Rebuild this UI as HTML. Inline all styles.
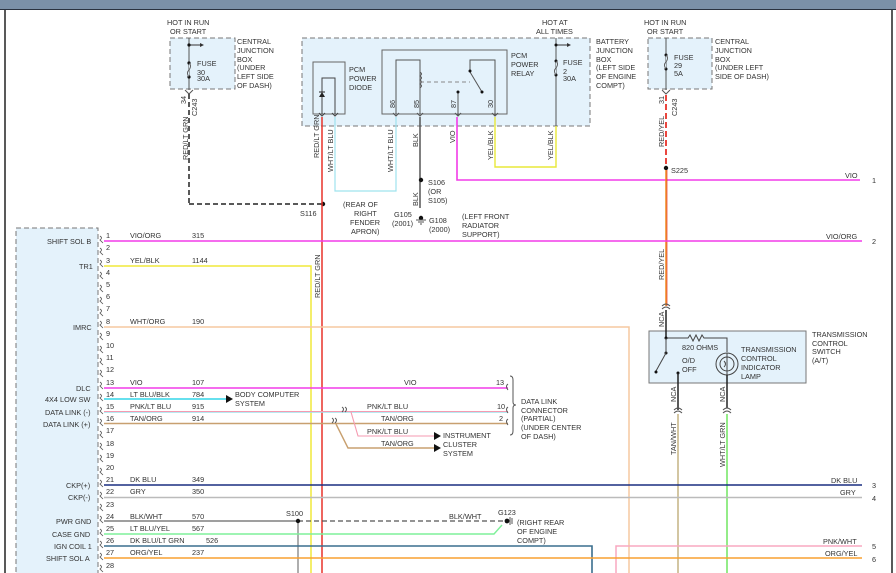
<!DOCTYPE html>
<html><head><meta charset="utf-8"><style>
html,body{margin:0;padding:0;background:#fff;}
svg{display:block;font-family:"Liberation Sans",sans-serif;}
text{font-size:7.3px;fill:#333;}
</style></head><body>
<svg width="896" height="573" viewBox="0 0 896 573" xmlns="http://www.w3.org/2000/svg">
<rect x="0" y="0" width="896" height="9" fill="#7b91a8"/>
<line x1="0" y1="9.5" x2="896" y2="9.5" stroke="#2a3340" stroke-width="1"/>
<line x1="5" y1="10" x2="5" y2="573" stroke="#222" stroke-width="1.5"/>
<line x1="892" y1="10" x2="892" y2="573" stroke="#222" stroke-width="1.5"/>

<!-- boxes -->
<rect x="170" y="38" width="65" height="51" fill="#e4f2fb" stroke="#777" stroke-dasharray="5,3"/>
<rect x="302" y="38" width="288" height="88" fill="#e4f2fb" stroke="#777" stroke-dasharray="5,3"/>
<rect x="313" y="62" width="32" height="52" fill="none" stroke="#666"/>
<rect x="382" y="50" width="125" height="64" fill="none" stroke="#666"/>
<rect x="648" y="38" width="64" height="51" fill="#e4f2fb" stroke="#777" stroke-dasharray="5,3"/>
<rect x="16" y="228" width="82" height="350" fill="#e4f2fb" stroke="#777" stroke-dasharray="5,3"/>
<rect x="649" y="331" width="157" height="52" fill="#e4f2fb" stroke="#777"/>

<!-- top left CJB -->
<text x="167" y="25">HOT IN RUN</text><text x="170" y="34">OR START</text>
<line x1="189" y1="38" x2="189" y2="90" stroke="#555"/>
<line x1="189" y1="45" x2="202" y2="45" stroke="#333"/><path d="M200,43 L204,45 L200,47Z" fill="#333"/>
<circle cx="189" cy="45" r="1.6" fill="#111"/><circle cx="189" cy="63" r="1.6" fill="#111"/><circle cx="189" cy="77" r="1.6" fill="#111"/>
<path d="M189,63 q3,3 0,7 q-3,3 0,7" fill="#e4f2fb" stroke="#555"/>
<text x="197" y="66">FUSE</text><text x="197" y="75">30</text><text x="197" y="81">30A</text>
<text x="237" y="44">CENTRAL</text><text x="237" y="53">JUNCTION</text><text x="237" y="62">BOX</text><text x="237" y="70">(UNDER</text><text x="237" y="79">LEFT SIDE</text><text x="237" y="88">OF DASH)</text>
<path d="M185,90 l4,4 l4,-4" fill="none" stroke="#555"/>
<line x1="189" y1="94" x2="189" y2="204" stroke="#222" stroke-width="1.5" stroke-dasharray="5,3"/>
<line x1="189" y1="204" x2="323" y2="204" stroke="#222" stroke-width="1.5" stroke-dasharray="5,3"/>
<text transform="translate(186,104) rotate(-90)">34</text>
<text transform="translate(197,116) rotate(-90)">C243</text>
<text transform="translate(188,160) rotate(-90)">RED/LT GRN</text>
<circle cx="323" cy="204" r="2.2" fill="#111"/>
<text x="300" y="216">S116</text>
<text x="343" y="207">(REAR OF</text><text x="354" y="216">RIGHT</text><text x="350" y="225">FENDER</text><text x="351" y="234">APRON)</text>

<!-- diode -->
<path d="M322,114 V78 H335 V114" fill="none" stroke="#444"/>
<path d="M319,97 h6 l-3,-5z" fill="#222"/><line x1="319" y1="92" x2="325" y2="92" stroke="#222"/>
<path d="M319,113 l3,3 l3,-3 M332,113 l3,3 l3,-3" fill="none" stroke="#444"/>
<text x="349" y="72">PCM</text><text x="349" y="81">POWER</text><text x="349" y="90">DIODE</text>
<line x1="322" y1="117" x2="322" y2="573" stroke="#e8322a" stroke-width="1.5"/>
<path d="M335,117 V191 H396 V117" fill="none" stroke="#9fe3ee" stroke-width="1.2"/>
<text transform="translate(319,158) rotate(-90)">RED/LT GRN</text>
<text transform="translate(333,172) rotate(-90)">WHT/LT BLU</text>
<text transform="translate(393,172) rotate(-90)">WHT/LT BLU</text>

<!-- relay -->
<path d="M396,114 V60 H420 V114" fill="none" stroke="#555"/>
<path d="M420,72 q3,2 0,4 q3,2 0,4 q3,2 0,4 q3,2 0,4" fill="none" stroke="#555"/>
<line x1="420" y1="82" x2="470" y2="82" stroke="#888" stroke-dasharray="4,3"/>
<path d="M458,92 V116 M495,116 V60 H470 V72" fill="none" stroke="#555"/>
<line x1="470" y1="72" x2="482" y2="92" stroke="#555"/>
<circle cx="470" cy="71" r="1.5" fill="#111"/><circle cx="482" cy="92" r="1.5" fill="#111"/><circle cx="458" cy="92" r="1.5" fill="#111"/>
<path d="M393,113 l3,3 l3,-3 M417,113 l3,3 l3,-3 M455,113 l3,3 l3,-3 M492,113 l3,3 l3,-3" fill="none" stroke="#555"/>
<text transform="translate(395,108) rotate(-90)">86</text><text transform="translate(419,108) rotate(-90)">85</text>
<text transform="translate(456,108) rotate(-90)">87</text><text transform="translate(493,108) rotate(-90)">30</text>
<text x="511" y="58">PCM</text><text x="511" y="67">POWER</text><text x="511" y="76">RELAY</text>
<line x1="420" y1="117" x2="420" y2="208" stroke="#555" stroke-width="1.5"/>
<circle cx="421" cy="180" r="2.2" fill="#111"/>
<text transform="translate(418,147) rotate(-90)">BLK</text>
<text transform="translate(418,206) rotate(-90)">BLK</text>
<text x="428" y="185">S106</text><text x="428" y="194">(OR</text><text x="428" y="203">S105)</text>
<circle cx="421" cy="218" r="2.2" fill="#111"/>
<path d="M416,220 h10 M418,222 h6 M420,224 h2" stroke="#555"/>
<text x="394" y="217">G105</text><text x="392" y="226">(2001)</text>
<text x="429" y="223">G108</text><text x="429" y="232">(2000)</text>
<text x="462" y="219">(LEFT FRONT</text><text x="462" y="228">RADIATOR</text><text x="462" y="237">SUPPORT)</text>
<path d="M457,117 V180 H860" fill="none" stroke="#f23be8" stroke-width="1.6"/>
<text transform="translate(455,143) rotate(-90)">VIO</text>
<path d="M495,117 V167 H556 V126" fill="none" stroke="#e8e83a" stroke-width="1.4"/>
<text transform="translate(493,160) rotate(-90)">YEL/BLK</text>
<text transform="translate(553,160) rotate(-90)">YEL/BLK</text>
<line x1="556" y1="38" x2="556" y2="126" stroke="#555"/>
<path d="M556,45 h13" stroke="#333"/><path d="M567,43 l4,2 l-4,2z" fill="#333"/>
<circle cx="556" cy="45" r="1.5" fill="#111"/><circle cx="556" cy="61" r="1.5" fill="#111"/><circle cx="556" cy="75" r="1.5" fill="#111"/>
<path d="M556,61 q3,3 0,7 q-3,3 0,7" fill="#e4f2fb" stroke="#555"/>
<text x="563" y="65">FUSE</text><text x="563" y="74">2</text><text x="563" y="81">30A</text>
<text x="542" y="25">HOT AT</text><text x="536" y="34">ALL TIMES</text>
<text x="596" y="44">BATTERY</text><text x="596" y="53">JUNCTION</text><text x="596" y="62">BOX</text><text x="596" y="70">(LEFT SIDE</text><text x="596" y="79">OF ENGINE</text><text x="596" y="88">COMPT)</text>

<!-- right CJB -->
<text x="644" y="25">HOT IN RUN</text><text x="647" y="34">OR START</text>
<line x1="666" y1="38" x2="666" y2="90" stroke="#555"/>
<circle cx="666" cy="55" r="1.5" fill="#111"/><circle cx="666" cy="69" r="1.5" fill="#111"/>
<path d="M666,55 q3,3 0,7 q-3,3 0,7" fill="#e4f2fb" stroke="#555"/>
<text x="674" y="60">FUSE</text><text x="674" y="68">29</text><text x="674" y="76">5A</text>
<text x="715" y="44">CENTRAL</text><text x="715" y="53">JUNCTION</text><text x="715" y="62">BOX</text><text x="715" y="70">(UNDER LEFT</text><text x="715" y="79">SIDE OF DASH)</text>
<path d="M662,90 l4,4 l4,-4" fill="none" stroke="#555"/>
<line x1="666" y1="95" x2="666" y2="166" stroke="#e8322a" stroke-width="1.8" stroke-dasharray="6,3"/>
<text transform="translate(664,104) rotate(-90)">31</text>
<text transform="translate(677,116) rotate(-90)">C243</text>
<text transform="translate(664,147) rotate(-90)">RED/YEL</text>
<circle cx="666" cy="168" r="2.2" fill="#111"/>
<text x="671" y="173">S225</text>
<text x="845" y="178">VIO</text><text x="872" y="183">1</text>
<line x1="666" y1="170" x2="666" y2="306" stroke="#f08a1a" stroke-width="1.5"/>
<line x1="667" y1="170" x2="667" y2="306" stroke="#e8322a" stroke-width="0.7"/>
<text transform="translate(664,280) rotate(-90)">RED/YEL</text>
<path d="M662,306 q4,-4 8,0 M662,309 q4,-4 8,0" fill="none" stroke="#555"/>
<line x1="666" y1="310" x2="666" y2="338" stroke="#222" stroke-width="1.5"/>
<text transform="translate(664,327) rotate(-90)">NCA</text>

<!-- trans switch -->
<path d="M666,338 H688 l2,-3 l3,6 l3,-6 l3,6 l3,-6 l2,3 H727 V352" fill="none" stroke="#444"/>
<circle cx="666" cy="338" r="1.5" fill="#111"/><circle cx="666" cy="353" r="1.5" fill="#111"/>
<line x1="666" y1="338" x2="666" y2="353" stroke="#444"/>
<line x1="666" y1="353" x2="656" y2="371" stroke="#444"/><circle cx="656" cy="372" r="1.5" fill="#111"/>
<circle cx="678" cy="373" r="1.5" fill="#111"/><line x1="678" y1="373" x2="678" y2="410" stroke="#222" stroke-width="1.5"/>
<circle cx="727" cy="364" r="11" fill="none" stroke="#444"/><circle cx="727" cy="364" r="7" fill="none" stroke="#444"/>
<path d="M727,353 v22 M724,361 q3,3 0,6" fill="none" stroke="#444"/>
<line x1="727" y1="375" x2="727" y2="408" stroke="#222" stroke-width="1.5"/>
<text x="682" y="350">820 OHMS</text>
<text x="682" y="363">O/D</text><text x="682" y="372">OFF</text>
<text x="741" y="352">TRANSMISSION</text><text x="741" y="361">CONTROL</text><text x="741" y="370">INDICATOR</text><text x="741" y="379">LAMP</text>
<text x="812" y="337">TRANSMISSION</text><text x="812" y="346">CONTROL</text><text x="812" y="354">SWITCH</text><text x="812" y="363">(A/T)</text>
<text transform="translate(676,402) rotate(-90)">NCA</text><text transform="translate(725,402) rotate(-90)">NCA</text>
<path d="M674,410 q4,-4 8,0 M674,413 q4,-4 8,0 M723,410 q4,-4 8,0 M723,413 q4,-4 8,0" fill="none" stroke="#555"/>
<line x1="678" y1="414" x2="678" y2="573" stroke="#c8b88a" stroke-width="1.6"/>
<line x1="727" y1="414" x2="727" y2="573" stroke="#7ae86a" stroke-width="1.6"/>
<text transform="translate(676,455) rotate(-90)">TAN/WHT</text>
<text transform="translate(725,467) rotate(-90)">WHT/LT GRN</text>

<!-- PCM connector pins -->
<g font-size="7.3">
<text x="47" y="244">SHIFT SOL B</text>
<text x="79" y="269">TR1</text>
<text x="73" y="330">IMRC</text>
<text x="76" y="391">DLC</text>
<text x="45" y="402">4X4 LOW SW</text>
<text x="45" y="415">DATA LINK (-)</text>
<text x="43" y="427">DATA LINK (+)</text>
<text x="66" y="488">CKP(+)</text>
<text x="68" y="500">CKP(-)</text>
<text x="56" y="524">PWR GND</text>
<text x="52" y="537">CASE GND</text>
<text x="54" y="549">IGN COIL 1</text>
<text x="46" y="561">SHIFT SOL A</text>
</g>
<g fill="none" stroke="#555" stroke-width="0.8">
<path d="M100,236 q3,2 0,4 l3,3 M100,248 q3,2 0,4 l3,3 M100,260 q3,2 0,4 l3,3 M100,272 q3,2 0,4 l3,3 M100,285 q3,2 0,4 l3,3 M100,297 q3,2 0,4 l3,3 M100,309 q3,2 0,4 l3,3 M100,321 q3,2 0,4 l3,3 M100,333 q3,2 0,4 l3,3 M100,346 q3,2 0,4 l3,3 M100,358 q3,2 0,4 l3,3 M100,370 q3,2 0,4 l3,3 M100,382 q3,2 0,4 l3,3 M100,394 q3,2 0,4 l3,3 M100,407 q3,2 0,4 l3,3 M100,419 q3,2 0,4 l3,3 M100,431 q3,2 0,4 l3,3 M100,443 q3,2 0,4 l3,3 M100,455 q3,2 0,4 l3,3 M100,468 q3,2 0,4 l3,3 M100,480 q3,2 0,4 l3,3 M100,492 q3,2 0,4 l3,3 M100,504 q3,2 0,4 l3,3 M100,516 q3,2 0,4 l3,3 M100,529 q3,2 0,4 l3,3 M100,541 q3,2 0,4 l3,3 M100,553 q3,2 0,4 l3,3 M100,565 q3,2 0,4 l3,3"/>
</g>
<g>
<text x="106" y="238">1</text><text x="106" y="250">2</text><text x="106" y="263">3</text><text x="106" y="275">4</text><text x="106" y="287">5</text><text x="106" y="299">6</text><text x="106" y="311">7</text><text x="106" y="324">8</text><text x="106" y="336">9</text><text x="106" y="348">10</text><text x="106" y="360">11</text><text x="106" y="372">12</text><text x="106" y="385">13</text><text x="106" y="397">14</text><text x="106" y="409">15</text><text x="106" y="421">16</text><text x="106" y="433">17</text><text x="106" y="446">18</text><text x="106" y="458">19</text><text x="106" y="470">20</text><text x="106" y="482">21</text><text x="106" y="494">22</text><text x="106" y="507">23</text><text x="106" y="519">24</text><text x="106" y="531">25</text><text x="106" y="543">26</text><text x="106" y="555">27</text><text x="106" y="568">28</text>
<text x="130" y="238">VIO/ORG</text><text x="192" y="238">315</text>
<text x="130" y="263">YEL/BLK</text><text x="192" y="263">1144</text>
<text x="130" y="324">WHT/ORG</text><text x="192" y="324">190</text>
<text x="130" y="385">VIO</text><text x="192" y="385">107</text>
<text x="130" y="397">LT BLU/BLK</text><text x="192" y="397">784</text>
<text x="130" y="409">PNK/LT BLU</text><text x="192" y="409">915</text>
<text x="130" y="421">TAN/ORG</text><text x="192" y="421">914</text>
<text x="130" y="482">DK BLU</text><text x="192" y="482">349</text>
<text x="130" y="494">GRY</text><text x="192" y="494">350</text>
<text x="130" y="519">BLK/WHT</text><text x="192" y="519">570</text>
<text x="130" y="531">LT BLU/YEL</text><text x="192" y="531">567</text>
<text x="130" y="543">DK BLU/LT GRN</text><text x="206" y="543">526</text>
<text x="130" y="555">ORG/YEL</text><text x="192" y="555">237</text>
</g>

<!-- wires -->
<line x1="104" y1="241" x2="862" y2="241" stroke="#f23be8" stroke-width="1.4"/>
<text x="826" y="239">VIO/ORG</text><text x="872" y="244">2</text>
<path d="M104,266 H311 V573" fill="none" stroke="#f0e83a" stroke-width="1.5"/>
<text transform="translate(320,298) rotate(-90)">RED/LT GRN</text>
<path d="M104,327 H629 V573" fill="none" stroke="#f6c9a0" stroke-width="1.5"/>
<line x1="104" y1="388" x2="508" y2="388" stroke="#f23be8" stroke-width="1.4"/>
<text x="404" y="385">VIO</text><text x="496" y="385">13</text>
<line x1="104" y1="399" x2="227" y2="399" stroke="#33d6e8" stroke-width="1.5"/>
<path d="M226,395 l7,4 l-7,4z" fill="#111"/>
<text x="235" y="397">BODY COMPUTER</text><text x="235" y="406">SYSTEM</text>
<line x1="104" y1="411.5" x2="508" y2="411.5" stroke="#f59ab0" stroke-width="1.1"/>
<line x1="104" y1="412.5" x2="508" y2="412.5" stroke="#9fe3ee" stroke-width="0.8"/>
<line x1="104" y1="423.5" x2="508" y2="423.5" stroke="#c8a070" stroke-width="1.6"/>
<text x="367" y="409">PNK/LT BLU</text><text x="497" y="409">10</text>
<text x="381" y="421">TAN/ORG</text><text x="499" y="421">2</text>
<path d="M342,407 q3,2 0,5 M345,407 q3,2 0,5 M332,418 q3,2 0,5 M335,418 q3,2 0,5" fill="none" stroke="#555"/>
<path d="M351,412 L358,436 H435" fill="none" stroke="#f59ab0" stroke-width="1.1"/>
<path d="M336,424 L348,448 H435" fill="none" stroke="#c8a070" stroke-width="1.4"/>
<path d="M434,432 l7,4 l-7,4z M434,444 l7,4 l-7,4z" fill="#111"/>
<text x="367" y="434">PNK/LT BLU</text><text x="381" y="446">TAN/ORG</text>
<text x="443" y="438">INSTRUMENT</text><text x="443" y="447">CLUSTER</text><text x="443" y="456">SYSTEM</text>
<path d="M510,376 q3,0 3,4 v22 q0,3 3,3 q-3,0 -3,3 v23 q0,4 -3,4" fill="none" stroke="#555"/>
<path d="M508,384 q-3,2 0,6 M508,407 q-3,2 0,6 M508,419 q-3,2 0,6" fill="none" stroke="#555"/>
<text x="521" y="404">DATA LINK</text><text x="521" y="413">CONNECTOR</text><text x="521" y="421">(PARTIAL)</text><text x="521" y="430">(UNDER CENTER</text><text x="521" y="439">OF DASH)</text>
<line x1="104" y1="485" x2="862" y2="485" stroke="#1a2f80" stroke-width="1.5"/>
<text x="831" y="483">DK BLU</text><text x="872" y="488">3</text>
<line x1="104" y1="497.5" x2="862" y2="497.5" stroke="#bbb" stroke-width="1.4"/>
<text x="840" y="495">GRY</text><text x="872" y="501">4</text>
<line x1="104" y1="521" x2="298" y2="521" stroke="#666" stroke-width="1.2"/>
<line x1="298" y1="521" x2="507" y2="521" stroke="#555" stroke-width="1.2" stroke-dasharray="5,3"/>
<line x1="298" y1="521" x2="298" y2="573" stroke="#777" stroke-width="1.2"/>
<circle cx="298" cy="521" r="2.2" fill="#111"/>
<text x="286" y="516">S100</text><text x="449" y="519">BLK/WHT</text><text x="498" y="515">G123</text>
<circle cx="507" cy="521" r="2.4" fill="#111"/><path d="M510,517 v8 M512,518 v6" stroke="#555"/>
<text x="517" y="525">(RIGHT REAR</text><text x="517" y="534">OF ENGINE</text><text x="517" y="543">COMPT)</text>
<path d="M104,534 H494 L502,525" fill="none" stroke="#7ff09a" stroke-width="1.4"/>
<path d="M104,546 H592 V573" fill="none" stroke="#3a6e8e" stroke-width="1.6"/>
<path d="M616,573 V546 H862" fill="none" stroke="#f8a8c0" stroke-width="1.5"/>
<text x="823" y="544">PNK/WHT</text><text x="872" y="549">5</text>
<line x1="104" y1="558" x2="862" y2="558" stroke="#f8a030" stroke-width="1.5"/>
<text x="825" y="556">ORG/YEL</text><text x="872" y="562">6</text>
</svg>
</body></html>
